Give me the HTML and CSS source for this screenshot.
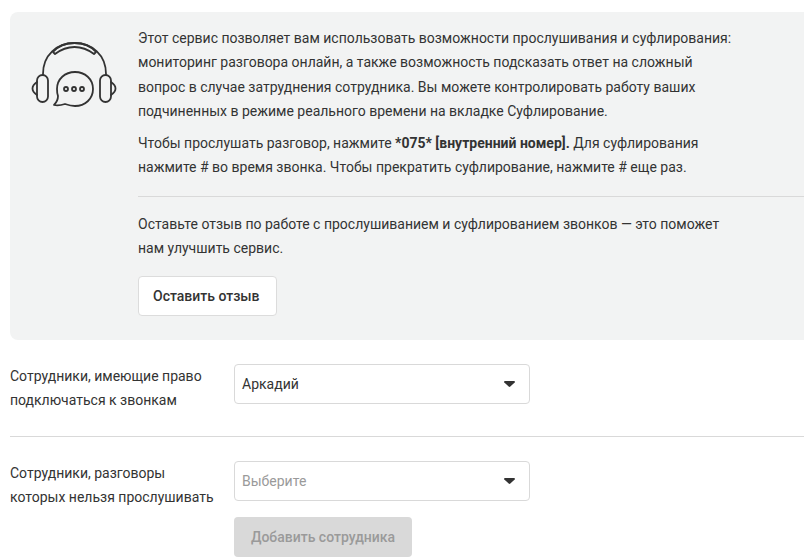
FILE: index.html
```html
<!DOCTYPE html>
<html lang="ru">
<head>
<meta charset="utf-8">
<title>Прослушивание и суфлирование</title>
<link rel="stylesheet" href="styles.css">
</head>
<body>
<section class="panel">
  <svg class="icon" width="92" height="76" viewBox="0 0 92 76" fill="none" stroke="#333" stroke-width="1.8" stroke-linecap="round" stroke-linejoin="round">
    <path d="M15 39V38C15 19 29 7 46.500 7S78 19 78 38V39"/>
    <path d="M25 16C30 10 38 7 46.500 7S63 10 68 16L66 18C60 13.500 53 11 46.500 11S33 13.500 27 18Z"/>
    <rect x="9" y="39" width="11" height="27" rx="5.500"/>
    <rect x="72" y="39" width="11" height="27" rx="5.500"/>
    <path d="M9 46C6 48 4.500 50 4.500 52.500S6 57 9 59"/>
    <path d="M83 46C86 48 87.500 50 87.500 52.500S86 57 83 59"/>
    <path d="M47 36C57 36 65 43 65 53S57 70 47 70C43 70 40 69 37 68C34 69 30 70 26 69C28 67 30 64 30 60C29 58 29 55 29 53C29 43 37 36 47 36Z"/>
    <circle cx="38" cy="53" r="2"/>
    <circle cx="46" cy="53" r="2"/>
    <circle cx="54" cy="53" r="2"/>
  </svg>
  <div class="panel-body">
    <p>Этот сервис позволяет вам использовать возможности прослушивания и суфлирования:<br>мониторинг разговора онлайн, а также возможность подсказать ответ на сложный<br>вопрос в случае затруднения сотрудника. Вы можете контролировать работу ваших<br>подчиненных в режиме реального времени на вкладке Суфлирование.</p>
    <p>Чтобы прослушать разговор, нажмите <b>*075* [внутренний номер].</b> Для суфлирования<br>нажмите # во время звонка. Чтобы прекратить суфлирование, нажмите # еще раз.</p>
    <hr class="rule">
    <p>Оставьте отзыв по работе с прослушиванием и суфлированием звонков — это поможет<br>нам улучшить сервис.</p>
    <button class="btn" type="button">Оставить отзыв</button>
  </div>
</section>
<form class="form">
  <div class="row row-first">
    <label class="label">Сотрудники, имеющие право<br>подключаться к звонкам</label>
    <div class="select"><span>Аркадий</span><svg class="caret" width="11" height="6" viewBox="0 0 11 6"><path d="M1 0H10C10.800 0 11.200 .8 10.700 1.400L6.300 5.600C5.800 6 5.200 6 4.700 5.600L.3 1.400C-.2 .8 .2 0 1 0Z"/></svg></div>
  </div>
  <hr class="sep">
  <div class="row">
    <label class="label">Сотрудники, разговоры<br>которых нельзя прослушивать</label>
    <div class="select placeholder"><span>Выберите</span><svg class="caret" width="11" height="6" viewBox="0 0 11 6"><path d="M1 0H10C10.800 0 11.200 .8 10.700 1.400L6.300 5.600C5.800 6 5.200 6 4.700 5.600L.3 1.400C-.2 .8 .2 0 1 0Z"/></svg></div>
  </div>
  <div class="actions"><button class="btn-disabled" type="button" disabled>Добавить сотрудника</button></div>
</form>
</body>
</html>
```
FILE: styles.css
```css
* { box-sizing: border-box; }
html, body { margin: 0; padding: 0; background: #fff; }
body {
  width: 804px;
  height: 559px;
  overflow: hidden;
  padding: 12px 0 0 10px;
  font-family: Roboto, "Liberation Sans", sans-serif;
  font-size: 14px;
  line-height: 24.5px;
  color: #333;
}
.panel {
  display: flex;
  height: 328px;
  padding: 13.9px 0 0 18px;
  background: #f2f3f3;
  border-radius: 8px 0 0 8px;
}
.icon { flex: none; margin: 10px 18px 0 0; }
.panel-body { flex: 1; min-width: 0; }
.panel-body p { margin: 0 0 7px; white-space: nowrap; }
.panel-body b { font-weight: 700; }
.rule { margin: 16px 0 15px; border: 0; border-top: 1px solid #d9d9d9; }
.btn {
  display: block;
  height: 40px;
  width: 139px;
  margin-top: 15px;
  padding: 0 0 0 14px;
  text-align: left;
  background: #fff;
  border: 1px solid #dcdcdc;
  border-radius: 4px;
  font: 500 14px Roboto, "Liberation Sans", sans-serif;
  color: #333;
}
.row { display: flex; align-items: flex-start; line-height: 24px; }
.row-first { margin-top: 24px; }
.label { width: 224px; flex: none; }
.select {
  display: flex;
  align-items: center;
  justify-content: space-between;
  width: 296px;
  height: 40px;
  padding: 0 14px 0 7px;
  background: #fff;
  border: 1px solid #d9d9d9;
  border-radius: 4px;
}
.placeholder { color: #9a9a9a; }
.caret { flex: none; fill: #333; }
.sep { margin: 24px 0 24px; border: 0; border-top: 1px solid #d9d9d9; }
.actions { padding: 8px 0 0 224px; }
.btn-disabled {
  display: block;
  width: 178px;
  height: 40px;
  padding: 0;
  background: #d9d9d9;
  border: 0;
  border-radius: 4px;
  font: 500 14px Roboto, "Liberation Sans", sans-serif;
  color: #9a9a9a;
}
```
